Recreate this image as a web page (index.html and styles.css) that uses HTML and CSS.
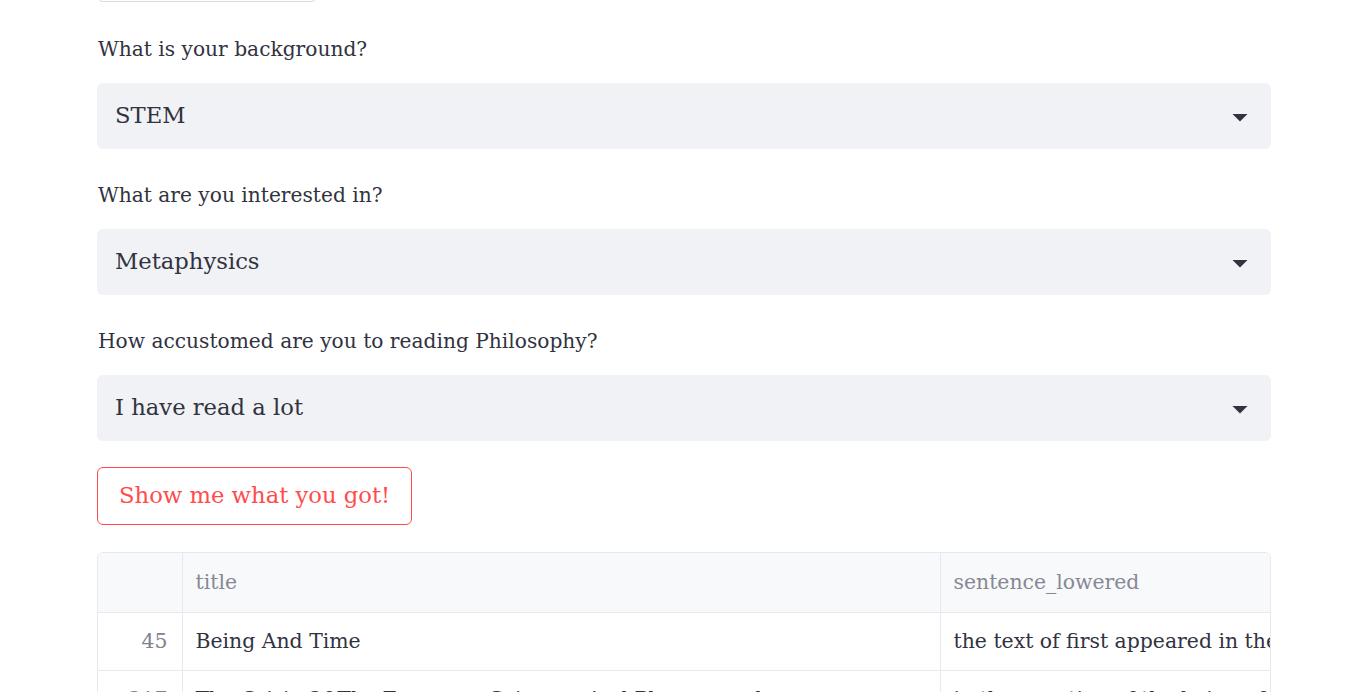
FILE: index.html
```html
<!DOCTYPE html>
<html lang="en">
<head>
<meta charset="utf-8">
<title>Philosophy recommender</title>
<link rel="stylesheet" href="styles.css">
</head>
<body>
<main class="page">
  <div class="text-input-stub"></div>

  <section class="field">
    <label class="field-label">What is your background?</label>
    <div class="select">
      <span class="select-value">STEM</span>
      <svg class="select-arrow" viewBox="0 0 24 24" width="36" height="36"><path d="M7 10l5 5 5-5z"/></svg>
    </div>
  </section>

  <section class="field">
    <label class="field-label">What are you interested in?</label>
    <div class="select">
      <span class="select-value">Metaphysics</span>
      <svg class="select-arrow" viewBox="0 0 24 24" width="36" height="36"><path d="M7 10l5 5 5-5z"/></svg>
    </div>
  </section>

  <section class="field">
    <label class="field-label">How accustomed are you to reading Philosophy?</label>
    <div class="select">
      <span class="select-value">I have read a lot</span>
      <svg class="select-arrow" viewBox="0 0 24 24" width="36" height="36"><path d="M7 10l5 5 5-5z"/></svg>
    </div>
  </section>

  <div class="button-row">
    <button class="btn">Show me what you got!</button>
  </div>

  <div class="table-wrap">
    <table class="data-table">
      <thead>
        <tr>
          <th class="col-index"></th>
          <th class="col-title">title</th>
          <th class="col-sentence">sentence_lowered</th>
        </tr>
      </thead>
      <tbody>
        <tr>
          <td class="col-index">45</td>
          <td class="col-title">Being And Time</td>
          <td class="col-sentence">the text of first appeared in the</td>
        </tr>
        <tr>
          <td class="col-index">217</td>
          <td class="col-title">The Crisis Of The European Sciences And Phenomenology</td>
          <td class="col-sentence">in the question of the being of being</td>
        </tr>
      </tbody>
    </table>
  </div>
</main>
</body>
</html>
```
FILE: styles.css
```css
html, body {
  margin: 0;
  padding: 0;
  background: #ffffff;
  overflow: hidden;
}

body {
  font-family: "DejaVu Serif", serif;
  color: #31333f;
}

.page {
  width: 1174px;
  margin-left: 97px;
  display: flex;
  flex-direction: column;
}

.text-input-stub {
  width: 220px;
  height: 40px;
  margin-top: -38px;
  border: 1px solid #d9d9de;
  border-radius: 6px;
  box-sizing: border-box;
}

.field {
  display: flex;
  flex-direction: column;
  margin-top: 32px;
}

.field + .field {
  margin-top: 31px;
}

.field-label {
  font-size: 20.2px;
  line-height: 30px;
  height: 30px;
  margin-bottom: 19px;
  padding-left: 1px;
  color: #31333f;
}

.select {
  height: 66px;
  background: #f0f2f6;
  border-radius: 6px;
  display: flex;
  align-items: center;
  justify-content: space-between;
  padding: 0 13px 2px 18px;
  box-sizing: border-box;
}

.select-value {
  font-size: 22.7px;
  color: #31333f;
}

.select-arrow {
  fill: #31333f;
  margin-top: 3px;
}

.button-row {
  margin-top: 26px;
  display: flex;
}

.btn {
  font-family: "DejaVu Serif", serif;
  font-size: 22.7px;
  color: #ff4b4b;
  background: #ffffff;
  border: 1px solid #ff4b4b;
  border-radius: 6px;
  height: 58px;
  padding: 0 21px 2px 21px;
  cursor: pointer;
}

.table-wrap {
  margin-top: 27px;
  border: 1px solid #e6e9ef;
  border-radius: 6px 6px 0 0;
  overflow: hidden;
  width: 1174px;
  box-sizing: border-box;
}

.data-table {
  border-collapse: collapse;
  table-layout: fixed;
  width: 1500px;
  font-size: 20.4px;
}

.data-table th,
.data-table td {
  padding: 0 13px 0 13px;
  white-space: nowrap;
  overflow: hidden;
  text-align: left;
  border-right: 1px solid #e6e9ef;
  border-bottom: 1px solid #e6e9ef;
}

.data-table th {
  height: 59px;
  background: #f8f9fb;
  font-weight: normal;
  color: #868894;
}

.data-table td {
  height: 58px;
  color: #31333f;
}

.data-table .col-index {
  width: 84px;
  box-sizing: border-box;
  text-align: right;
  padding-right: 14px;
}

.data-table td.col-index {
  color: #80828e;
}

.data-table .col-title {
  width: 758px;
  box-sizing: border-box;
}

.data-table .col-sentence {
  width: 658px;
  box-sizing: border-box;
}
```
